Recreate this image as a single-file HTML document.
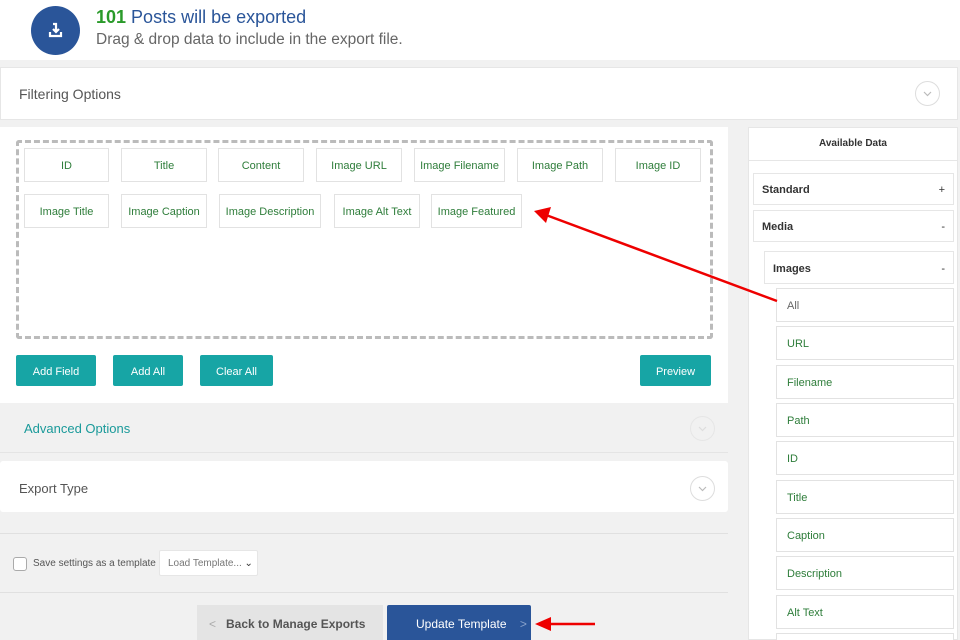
<!DOCTYPE html>
<html style="width:960px;height:640px;overflow:hidden"><head><meta charset="utf-8"><style>
*{box-sizing:border-box;margin:0;padding:0}
body{width:960px;height:640px;background:#f1f1f1;font-family:"Liberation Sans",sans-serif;position:relative;overflow:hidden}
.a{position:absolute}
.fb{position:absolute;height:34px;border:1px solid #e2e2e2;background:#fff;color:#2e7d3a;font-size:11px;display:flex;align-items:center;justify-content:center;padding-top:2px}
.btn{position:absolute;top:355px;height:31px;background:#17a5a5;color:#fff;font-size:11px;display:flex;align-items:center;justify-content:center;border-radius:2px;padding-top:2px}
.ri{position:absolute;left:776px;width:178px;height:34px;border:1px solid #e2e2e2;background:#fff;color:#2e7d3a;font-size:11px;padding-left:10px;display:flex;align-items:center;padding-top:2px}
.circ{position:absolute;width:25px;height:25px;border:1px solid #ddd;border-radius:50%}
</style></head><body>
<div class="a" style="left:0;top:0;width:960px;height:60px;background:#fff"></div>
<div class="a" style="left:31px;top:6px;width:49px;height:49px;border-radius:50%;background:#2a5599"></div>
<svg class="a" style="left:43px;top:18px" width="25" height="25" viewBox="0 0 25 25"><path d="M7 14v4h11v-4" fill="none" stroke="#fff" stroke-width="2.2"/><path d="M10 6h3v8M10 11l3 3 3-3" fill="none" stroke="#fff" stroke-width="2.2"/></svg>
<div class="a" style="left:96px;top:7px;font-size:18px;color:#2a5599"><b style="color:#2a9a2a">101</b> Posts will be exported</div>
<div class="a" style="left:96px;top:31px;font-size:15.5px;color:#666">Drag &amp; drop data to include in the export file.</div>

<div class="a" style="left:0;top:67px;width:958px;height:53px;background:#fff;border:1px solid #e6e6e6"></div>
<div class="a" style="left:19px;top:86px;font-size:14px;color:#555">Filtering Options</div>
<div class="circ" style="left:915px;top:81px"><svg width="23" height="23"><path d="M8 10l3.5 3.5 3.5-3.5" fill="none" stroke="#bbb" stroke-width="1.2"/></svg></div>

<div class="a" style="left:0;top:127px;width:728px;height:276px;background:#fff"></div>
<div class="a" style="left:16px;top:140px;width:697px;height:199px;border:3px dashed #bbb;border-radius:3px"></div>
<div class="fb" style="left:24px;top:148px;width:85px">ID</div>
<div class="fb" style="left:121px;top:148px;width:86px">Title</div>
<div class="fb" style="left:218px;top:148px;width:86px">Content</div>
<div class="fb" style="left:316px;top:148px;width:86px">Image URL</div>
<div class="fb" style="left:414px;top:148px;width:91px">Image Filename</div>
<div class="fb" style="left:517px;top:148px;width:86px">Image Path</div>
<div class="fb" style="left:615px;top:148px;width:86px">Image ID</div>
<div class="fb" style="left:24px;top:194px;width:85px">Image Title</div>
<div class="fb" style="left:121px;top:194px;width:86px">Image Caption</div>
<div class="fb" style="left:219px;top:194px;width:102px">Image Description</div>
<div class="fb" style="left:334px;top:194px;width:86px">Image Alt Text</div>
<div class="fb" style="left:431px;top:194px;width:91px">Image Featured</div>
<div class="btn" style="left:16px;width:80px">Add Field</div>
<div class="btn" style="left:113px;width:70px">Add All</div>
<div class="btn" style="left:200px;width:73px">Clear All</div>
<div class="btn" style="left:640px;width:71px">Preview</div>

<div class="a" style="left:0;top:403px;width:728px;height:50px;background:#f1f1f1;border-bottom:1px solid #e4e4e4"></div>
<div class="a" style="left:24px;top:421px;font-size:13px;color:#1a9a9a">Advanced Options</div>
<div class="circ" style="left:690px;top:416px;border-color:#e6e6e6"><svg width="23" height="23"><path d="M8 10l3.5 3.5 3.5-3.5" fill="none" stroke="#ddd" stroke-width="1.2"/></svg></div>
<div class="a" style="left:0;top:461px;width:728px;height:51px;background:#fff;border-radius:3px"></div>
<div class="a" style="left:19px;top:481px;font-size:13px;color:#555">Export Type</div>
<div class="circ" style="left:690px;top:476px"><svg width="23" height="23"><path d="M8 10l3.5 3.5 3.5-3.5" fill="none" stroke="#bbb" stroke-width="1.2"/></svg></div>

<div class="a" style="left:0;top:533px;width:728px;height:1px;background:#e0e0e0"></div>
<div class="a" style="left:0;top:592px;width:728px;height:1px;background:#e0e0e0"></div>
<div class="a" style="left:13px;top:557px;width:14px;height:14px;border:1px solid #aaa;border-radius:3px;background:#fff"></div>
<div class="a" style="left:33px;top:558px;font-size:10px;color:#555">Save settings as a template</div>
<div class="a" style="left:159px;top:550px;width:99px;height:26px;background:#fff;border:1px solid #e6e6e6;border-radius:2px;font-size:10px;color:#777;padding:7px 0 0 8px">Load Template... <span style="color:#333">&#8964;</span></div>
<div class="a" style="left:197px;top:605px;width:186px;height:35px;background:#e4e4e4;font-size:12px;color:#555;font-weight:bold;padding:12px 0 0 12px"><span style="color:#aaa;font-weight:normal">&lt;</span>&nbsp;&nbsp; Back to Manage Exports</div>
<div class="a" style="left:387px;top:605px;width:144px;height:35px;background:#2a5599;border-radius:2px 2px 0 0;font-size:12px;color:#fff;padding:12px 0 0 29px">Update Template &nbsp;&nbsp;&nbsp;<span style="color:#8aa3cc">&gt;</span></div>

<div class="a" style="left:748px;top:127px;width:210px;height:513px;background:#fff;border:1px solid #e6e6e6"></div>
<div class="a" style="left:748px;top:160px;width:210px;height:1px;background:#e6e6e6"></div>
<div class="a" style="left:748px;top:138px;width:210px;text-align:center;font-size:10px;font-weight:bold;color:#333">Available Data</div>
<div class="a" style="left:753px;top:173px;width:201px;height:32px;border:1px solid #e6e6e6;font-size:11px;font-weight:bold;color:#333;padding:10px 8px 0 8px">Standard<span style="float:right;font-weight:normal">+</span></div>
<div class="a" style="left:753px;top:210px;width:201px;height:32px;border:1px solid #e6e6e6;font-size:11px;font-weight:bold;color:#333;padding:10px 8px 0 8px">Media<span style="float:right;font-weight:normal">-</span></div>
<div class="a" style="left:764px;top:251px;width:190px;height:33px;border:1px solid #e6e6e6;font-size:11px;font-weight:bold;color:#333;padding:11px 8px 0 8px">Images<span style="float:right;font-weight:normal">-</span></div>
<div class="ri" style="top:288px;color:#666">All</div>
<div class="ri" style="top:326px">URL</div>
<div class="ri" style="top:365px">Filename</div>
<div class="ri" style="top:403px">Path</div>
<div class="ri" style="top:441px">ID</div>
<div class="ri" style="top:480px">Title</div>
<div class="ri" style="top:518px">Caption</div>
<div class="ri" style="top:556px">Description</div>
<div class="ri" style="top:595px">Alt Text</div>
<div class="ri" style="top:633px;height:7px;border-bottom:none"></div>

<svg class="a" style="left:0;top:0" width="960" height="640">
<line x1="777" y1="301" x2="546" y2="215" stroke="#e00" stroke-width="2.5"/>
<polygon points="534,211 551,207 546,223" fill="#e00"/>
<line x1="595" y1="624" x2="548" y2="624" stroke="#e00" stroke-width="2.5"/>
<polygon points="535,624 551,617 551,631" fill="#e00"/>
</svg>
</body></html>
